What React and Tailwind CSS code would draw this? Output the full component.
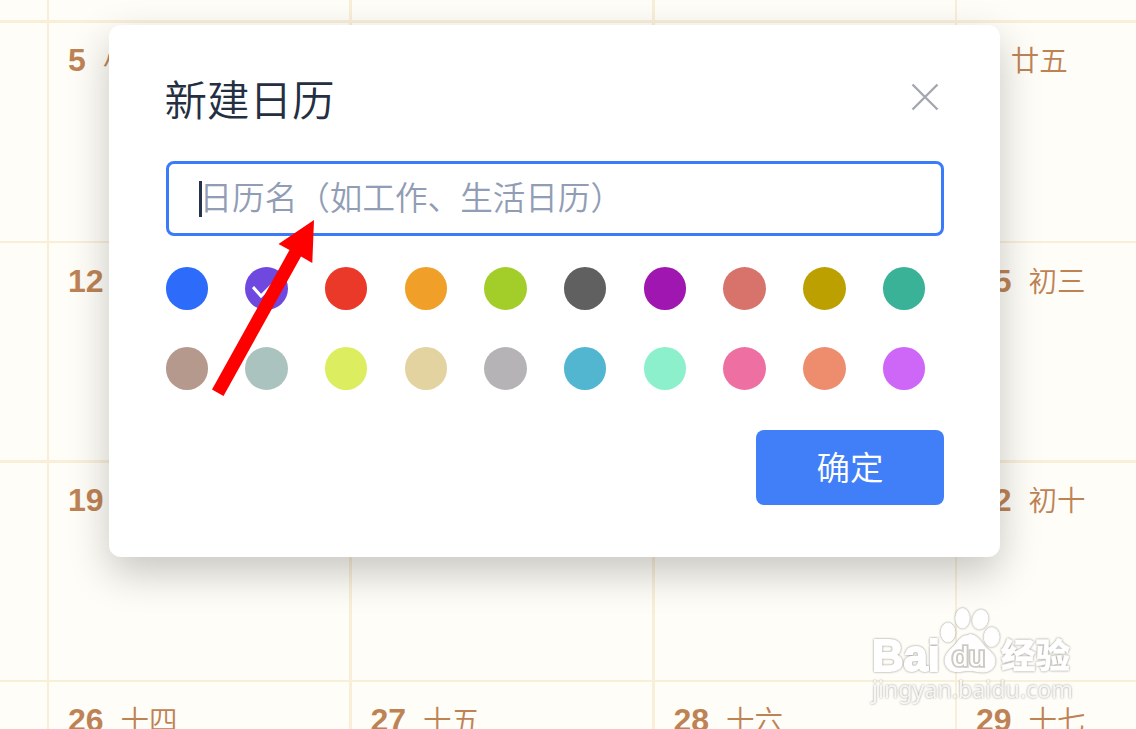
import { useState } from 'react';

const rows = [
    { height: 'h-[23px] border-b-3', pad: 'pt-0', days: [] },
    { height: 'h-[220px] border-b-2', pad: 'pt-[18px]', days: [['5', '小满'], ['6', '廿二'], ['7', '廿三'], ['8', '廿五']] },
    { height: 'h-[220px] border-b-3', pad: 'pt-[19px]', days: [['12', '三十'], ['13', '初一'], ['14', '初二'], ['15', '初三']] },
    { height: 'h-[219px] border-b-2', pad: 'pt-[18px]', days: [['19', '初七'], ['20', '初八'], ['21', '初九'], ['22', '初十']] },
    { height: 'h-[220px] border-b-2', pad: 'pt-[19px]', days: [['26', '十四'], ['27', '十五'], ['28', '十六'], ['29', '十七']] },
];

const colors = [
    '#2d6bfa', '#6f48e0', '#ea3829', '#f0a029', '#a3ce2a', '#606060', '#a016b0', '#d7736b', '#bca000', '#3ab297',
    '#b6998d', '#abc3bf', '#dcee5f', '#e2d3a0', '#b5b3b6', '#52b6d1', '#8df0cd', '#ee70a3', '#ee8c6e', '#ce66f8',
];

function Calendar() {
    return (
        <div className="h-full overflow-hidden text-[#be8355]">
            {rows.map((row, i) => (
                <div key={i} className={`${row.height} grid grid-cols-[49px_302.5px_303px_302.5px_303px] border-[#f9eed8]`}>
                    {[null, 0, 1, 2, 3].map((d, c) => (
                        <div key={c} className={`${c === 1 || c === 2 ? 'border-r-3' : 'border-r-2'} ${row.pad} border-[#f9eed8] pl-[19px]`}>
                            {d !== null && row.days[d] && (
                                <div className="flex items-baseline gap-[17px] whitespace-nowrap leading-[38px]">
                                    <span className="text-[32px] font-bold">{row.days[d][0]}</span>
                                    <span className="text-[28.5px] font-[350]">{row.days[d][1]}</span>
                                </div>
                            )}
                        </div>
                    ))}
                </div>
            ))}
        </div>
    );
}

function Watermark() {
    return (
        <svg className="absolute left-[866px] top-[600px] drop-shadow-[0_0_1px_#8f8e88]" width="220" height="110" viewBox="866 600 220 110">
            <g fill="#fff" stroke="#fff">
                <text x="872" y="670.500" fontSize="45" fontWeight="bold" strokeWidth="2" textLength="68" lengthAdjust="spacingAndGlyphs">Bai</text>
                <ellipse cx="948" cy="632.5" rx="7" ry="9.5" />
                <ellipse cx="962.5" cy="618.3" rx="6.8" ry="9.8" />
                <ellipse cx="980.3" cy="619.5" rx="7.5" ry="9.5" transform="rotate(14 980.3 619.5)" />
                <ellipse cx="991.7" cy="637" rx="7.5" ry="9.5" />
                <path d="M969 634.500c8 0 11 6 15 11s11 8 11 15.500c0 7-5 11-12 11-5 0-9-1.500-14-1.500s-9 1.500-13 1c-7 0-11-5-11-11 0-7 6-11 10-15.500s6-9.500 14-9.500z" />
                <text x="952" y="665.500" fontSize="27" strokeWidth="3.600" stroke="#cbcac4" paintOrder="stroke" textLength="33" lengthAdjust="spacingAndGlyphs">du</text>
                <text x="1001" y="668" fontSize="34.500" fontWeight="900" strokeWidth="0.500">经验</text>
            </g>
            <text x="872" y="697.500" fontSize="23" fill="#fff" opacity="0.85" className="font-['Noto_Sans']" textLength="201" lengthAdjust="spacingAndGlyphs">jingyan.baidu.com</text>
        </svg>
    );
}

function NewCalendarDialog() {
    const [name, setName] = useState('');
    const [selected, setSelected] = useState(1);

    return (
        <div className="w-[891px] h-[532px] rounded-xl bg-white pl-[56.5px] pr-[56px] pt-[49px] shadow-[0_16px_40px_rgba(0,0,0,0.22)]">
            <div className="flex items-start justify-between">
                <h1 className="-ml-px text-[42.5px] leading-[56px] font-[350] text-[#242f42]">新建日历</h1>
                <button className="mt-[9px] mr-[5px]">
                    <svg width="28" height="28" viewBox="0 0 28 28" stroke="#a5a7b0" strokeWidth="2.4" fill="none">
                        <path d="M1.500 1.500l25 25M26.500 1.500l-25 25" />
                    </svg>
                </button>
            </div>
            <label className="mt-[31px] flex h-[75px] items-center rounded-lg border-3 border-[#3b7bfa] pl-[30px]">
                {!name && <span className="-mr-[2px] h-[36px] w-[3px] bg-[#26334b]" />}
                <input
                    value={name}
                    onChange={e => setName(e.target.value)}
                    placeholder="日历名（如工作、生活日历）"
                    className="h-full flex-1 pt-px text-[32.6px] font-[350] outline-none placeholder:text-[#919db5]"
                />
            </label>
            <div className="mt-[31px] grid w-[797px] grid-cols-10 gap-y-[37.5px]">
                {colors.map((color, i) => (
                    <button
                        key={color}
                        onClick={() => setSelected(i)}
                        className="flex size-[42.5px] items-center justify-center rounded-full"
                        style={{ backgroundColor: color }}
                    >
                        {selected === i && (
                            <svg width="28" height="22" viewBox="0 0 28 22" fill="none" stroke="#fff" strokeWidth="3">
                                <path d="M1 10l8 9L25 3" />
                            </svg>
                        )}
                    </button>
                ))}
            </div>
            <div className="mt-[40.5px] flex justify-end">
                <button className="h-[75px] w-[188px] rounded-lg bg-[#417ff9] pt-[3px] text-[33.5px] font-[350] text-white">确定</button>
            </div>
        </div>
    );
}

export default function App() {
    return (
        <div className="relative h-[729px] w-[1136px] overflow-hidden bg-[#fefdf7] font-['Liberation_Sans','Noto_Sans_CJK_SC',sans-serif]">
            <Calendar />
            <div className="absolute inset-0 flex items-start pl-[109px] pt-[25px]">
                <NewCalendarDialog />
            </div>
            {/* pointer to the name field */}
            <svg className="pointer-events-none absolute left-[210px] top-[218px]" width="110" height="182" viewBox="210 218 110 182">
                <path d="M314 220l-1.700 43-11.300-6.500L223.500 396 212 389.500 289.500 250 278.500 244z" fill="#fe0000" />
            </svg>
            <Watermark />
        </div>
    );
}
